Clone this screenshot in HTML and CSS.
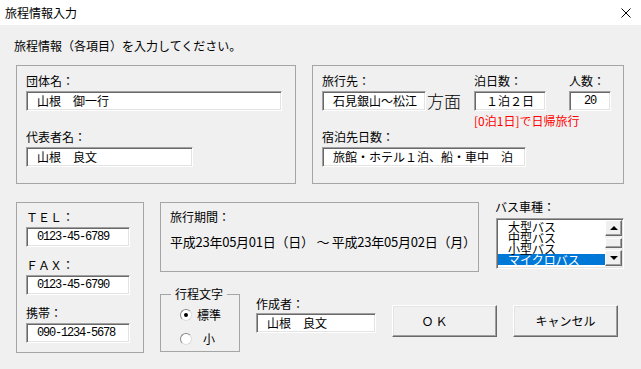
FILE: index.html
```html
<!doctype html>
<html>
<head>
<meta charset="utf-8">
<title>旅程情報入力</title>
<link rel="stylesheet" href="styles.css">
</head>
<body>
<div class="titlebar">
	<span class="title">旅程情報入力</span>
	<svg class="close" width="10" height="10" viewBox="0 0 10 10"><path d="M0.5 0.5L9.5 9.5M9.5 0.5L0.5 9.5" stroke="#000" stroke-width="1" fill="none"/></svg>
</div>

<div class="client">
	<p class="intro">旅程情報（各項目）を入力してください。</p>

	<div class="row1">
		<div class="group g-party">
			<div class="label">団体名：</div>
			<div class="field w-party">山根　御一行</div>
			<div class="label next">代表者名：</div>
			<div class="field w-rep">山根　良文</div>
		</div>
		<div class="group g-trip">
			<div class="trip-top">
				<div class="col col-dest">
					<div class="label">旅行先：</div>
					<div class="dest">
						<div class="field w-dest">石見銀山～松江</div>
						<span class="houmen">方面</span>
					</div>
				</div>
				<div class="col col-nights">
					<div class="label">泊日数：</div>
					<div class="field w-nights center">１泊２日</div>
					<div class="note">[0泊1日]で日帰旅行</div>
				</div>
				<div class="col">
					<div class="label">人数：</div>
					<div class="field w-people center mono">20</div>
				</div>
			</div>
			<div class="label">宿泊先日数：</div>
			<div class="field w-stay">旅館・ホテル１泊、船・車中　泊</div>
		</div>
	</div>

	<div class="row2">
		<div class="group g-phone">
			<div class="label">ＴＥＬ：</div>
			<div class="field w-phone mono">0123-45-6789</div>
			<div class="label gap">ＦＡＸ：</div>
			<div class="field w-phone mono">0123-45-6790</div>
			<div class="label gap">携帯：</div>
			<div class="field w-phone mono">090-1234-5678</div>
		</div>

		<div class="right">
			<div class="right-top">
				<div class="group g-period">
					<div class="label">旅行期間：</div>
					<div class="period">平成23年05月01日（日） ～ 平成23年05月02日（月）</div>
				</div>
				<div class="bus">
					<div class="label">バス車種：</div>
					<div class="list">
						<ul class="items">
							<li>大型バス</li>
							<li>中型バス</li>
							<li>小型バス</li>
							<li class="sel">マイクロバス</li>
						</ul>
						<div class="scroll">
							<div class="sb up"></div>
							<div class="sb thumb"></div>
							<div class="sb down"></div>
						</div>
					</div>
				</div>
			</div>

			<div class="right-bottom">
				<fieldset class="g-style">
					<legend>行程文字</legend>
					<div class="opt"><span class="radio on"></span>標準</div>
					<div class="opt"><span class="radio"></span><span class="small">小</span></div>
				</fieldset>
				<div class="author">
					<div class="label">作成者：</div>
					<div class="field w-author">山根　良文</div>
				</div>
				<div class="btn ok">ＯＫ</div>
				<div class="btn">キャンセル</div>
			</div>
		</div>
	</div>
</div>
</body>
</html>
```

FILE: styles.css
```css
*{ margin:0; padding:0; box-sizing:border-box; list-style:none;}
body{ width:641px; height:369px; overflow:hidden; background:#f0f0f0; color:#000; font:12px/16px "Noto Sans CJK JP", sans-serif;}

.titlebar{ height:25px; background:#fff; display:flex; align-items:center; justify-content:space-between; padding:0 10px 0 5px;}
.title{ line-height:16px;}

.intro{ padding:13px 0 0 14px;}

/* group boxes */
.group{ border:1px solid #a5a5a5;}
.label{ height:16px; white-space:nowrap;}
.field{ height:20px; margin-top:2px; background:#fff; border:1px solid; border-color:#a0a0a0 #fff #fff #a0a0a0; box-shadow:inset 1px 1px 0 #696969, inset -1px -1px 0 #e3e3e3; padding-left:10px; line-height:18px; white-space:nowrap; overflow:hidden;}
.field.center{ padding-left:0; text-align:center;}
.mono{ font-family:"Liberation Mono", monospace; font-size:12px; letter-spacing:-1.2px;}

.row1{ display:flex; gap:16px; padding-left:16px; margin-top:11px;}
.g-party{ width:280px; height:119px; padding:7px 0 0 9px;}
.g-party .next{ margin-top:18px;}
.w-party{ width:256px;}
.w-rep{ width:167px;}

.g-trip{ width:312px; height:119px; padding:7px 0 0 9px;}
.trip-top{ display:flex;}
.col-dest{ width:152px;}
.col-nights{ width:95px;}
.dest{ display:flex; align-items:center;}
.w-dest{ width:104px;}
.houmen{ font-size:17px; line-height:20px; margin:2px 0 0 1px; font-weight:300;}
.w-nights{ width:72px;}
.w-people{ width:42px; padding-left:2px;}
.note{ color:#f00; margin-top:2px; white-space:nowrap;}
.w-stay{ width:204px;}

.row2{ display:flex; gap:16px; padding-left:16px; margin-top:18px;}
.g-phone{ width:128px; height:151px; padding:6px 0 0 9px;}
.g-phone .gap{ margin-top:10px;}
.w-phone{ width:104px;}

.right{ display:flex; flex-direction:column;}
.right-top{ display:flex; align-items:flex-start;}
.g-period{ width:319px; height:70px; padding:6px 0 0 9px;}
.period{ font-size:13px; line-height:16px; margin-top:9px; white-space:nowrap; letter-spacing:-0.25px;}

.bus{ margin:-3px 0 0 16px;}
.list{ width:128px; height:51px; margin:3px 0 0 1px; display:flex; background:#fff; border:1px solid; border-color:#a0a0a0 #fff #fff #a0a0a0; box-shadow:inset 1px 1px 0 #696969, inset -1px -1px 0 #e3e3e3; padding:1px; overflow:hidden;}
.items{ flex:1; padding-top:1px; overflow:hidden;}
.items li{ height:11px; line-height:11px; padding-left:10px; white-space:nowrap;}
.items .sel{ background:#0078d7; color:#fff;}
.scroll{ width:17px; display:flex; flex-direction:column; gap:2px; background:#f0f0f0;}
.sb{ background:#f0f0f0; border:1px solid; border-color:#fff #696969 #696969 #fff; box-shadow:inset -1px -1px 0 #a0a0a0; display:flex; align-items:center; justify-content:center;}
.up, .down{ height:16px;}
.thumb{ height:10px;}
.up::after{ content:""; border-left:4px solid transparent; border-right:4px solid transparent; border-bottom:4px solid #000;}
.down::after{ content:""; border-left:4px solid transparent; border-right:4px solid transparent; border-top:4px solid #000;}

.right-bottom{ display:flex; align-items:flex-start;}
.g-style{ width:80px; margin-top:15px; padding:2px 0 0 0; border:1px solid #a5a5a5;}
.g-style legend{ margin-left:10px; padding:0 4px; line-height:14px;}
.opt{ display:flex; align-items:center; height:24px; padding-left:19px;}
.radio{ width:12px; height:12px; margin-right:5px; border-radius:50%; background:#fff; border:1px solid; border-color:#8a8a8a #dcdcdc #dcdcdc #8a8a8a; display:flex; align-items:center; justify-content:center;}
.radio.on::after{ content:""; width:4px; height:4px; border-radius:50%; background:#000;}
.small{ margin-left:6px;}

.author{ margin:24px 0 0 16px;}
.author .field{ margin-top:1px;}
.w-author{ width:120px;}

.btn{ width:105px; height:32px; margin:33px 0 0 16px; display:flex; align-items:center; justify-content:center; background:#f0f0f0; border:1px solid; border-color:#fff #696969 #696969 #fff; box-shadow:inset -1px -1px 0 #a0a0a0, inset 1px 1px 0 #e3e3e3;}
.btn.ok{ padding-right:18px; letter-spacing:2px;}
```
